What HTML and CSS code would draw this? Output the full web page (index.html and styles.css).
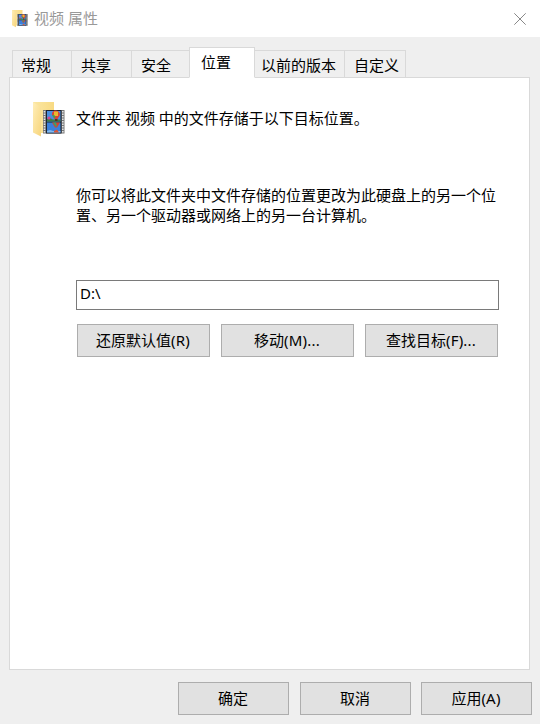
FILE: index.html
```html
<!DOCTYPE html>
<html lang="zh-CN">
<head>
<meta charset="utf-8">
<title>视频 属性</title>
<link rel="stylesheet" href="styles.css">
</head>
<body>
<svg width="0" height="0" class="defs" aria-hidden="true">
  <defs>
    <linearGradient id="back" x1="0" y1="0" x2="1" y2="0"><stop offset="0" stop-color="#fbe7a3"/><stop offset="1" stop-color="#f8da83"/></linearGradient>
    <linearGradient id="front" x1="0" y1="0" x2="1" y2="1"><stop offset="0" stop-color="#ffeeb8"/><stop offset="1" stop-color="#f7d57c"/></linearGradient>
    <symbol id="video-folder" viewBox="0 0 32 36">
      <path d="M0 0H21V31H6L0 30Z" fill="url(#back)"/>
      <path d="M0 0L8 5V34.500L0 30.500Z" fill="url(#front)"/>
      <rect x="10" y="8" width="21.500" height="23.500" fill="#777"/>
      <path d="M11.500 9V31M29.800 9V31" stroke="#e4e4e4" stroke-width="1.600" stroke-dasharray="1.500 1"/>
      <rect x="13" y="8" width="15.500" height="23.500" fill="#1d2430"/>
      <rect x="14" y="9" width="13.500" height="10.500" fill="#4a8ee0"/>
      <rect x="14" y="20.500" width="13.500" height="10" fill="#3a80dc"/>
      <path d="M14 17L17 16L20 17.500H27.500V19.500H14Z" fill="#3d7c4c"/>
      <circle cx="16" cy="16" r="1.600" fill="#d7478b"/>
      <path d="M19 13C18 7 27 7 27 13L24.500 17H21.500Z" fill="#dc4434"/>
      <path d="M21 9.500H25V14H21Z" fill="#e9b82d"/>
      <path d="M19 13H21.500L22.500 16H21Z" fill="#3fa552"/>
      <path d="M22 17H24.500V19H22Z" fill="#54361f"/>
      <path d="M19 20.500H27L24 25.500H22Z" fill="#da402c"/>
      <path d="M20 20.500H23L24 24.500H22.500Z" fill="#37a16c"/>
      <path d="M14 29L17 28L20 29H27.500V30.500H14Z" fill="#83b9ed"/>
      <path d="M21 29L24 27.500L26 30.500H21Z" fill="#d85535"/>
    </symbol>
  </defs>
</svg>
<header class="titlebar">
  <svg class="title-icon"><use href="#video-folder"/></svg>
  <span class="title">视频 属性</span>
  <svg class="close" viewBox="0 0 12 12" aria-label="关闭"><path d="M.3.3L11.700 11.700M11.700.3L.3 11.700"/></svg>
</header>
<main class="dialog">
  <nav class="tabs">
    <div class="tab general">常规</div>
    <div class="tab sharing">共享</div>
    <div class="tab security">安全</div>
    <div class="tab active">位置</div>
    <div class="tab versions">以前的版本</div>
    <div class="tab custom">自定义</div>
  </nav>
  <section class="panel">
    <div class="summary">
      <svg class="folder-icon"><use href="#video-folder"/></svg>
      <p>文件夹 视频 中的文件存储于以下目标位置。</p>
    </div>
    <p class="description">你可以将此文件夹中文件存储的位置更改为此硬盘上的另一个位<br>置、另一个驱动器或网络上的另一台计算机。</p>
    <div class="path">D:\</div>
    <div class="actions">
      <button>还原默认值<span class="key">(R)</span></button>
      <button>移动<span class="key">(M)...</span></button>
      <button>查找目标<span class="key">(F)...</span></button>
    </div>
  </section>
  <footer class="footer">
    <button>确定</button>
    <button>取消</button>
    <button>应用<span class="key">(A)</span></button>
  </footer>
</main>
</body>
</html>
```
FILE: styles.css
```css
* { box-sizing: border-box; }
body {
  margin: 0;
  width: 540px;
  height: 724px;
  overflow: hidden;
  background: #efefef;
  color: #000;
  font: 15px/20px "Noto Sans", "Noto Sans CJK SC", sans-serif;
}
p { margin: 0; }
.defs { display: block; }
.titlebar {
  display: flex;
  align-items: center;
  height: 37px;
  padding: 0 14px 0 12px;
  background: #fff;
  color: #999;
}
.title-icon { width: 16px; height: 18px; margin-right: 6px; }
.title { flex: 1; padding-bottom: 2px; }
.close { width: 12px; height: 12px; fill: none; stroke: #888; stroke-width: 1; }
.dialog { padding: 10px 8px 0 9px; }
.tabs {
  position: relative;
  z-index: 1;
  display: flex;
  align-items: flex-end;
  height: 31px;
  margin: 0 0 -1px 3px;
}
.tab {
  height: 28px;
  padding: 4px 0 0 9px;
  border: 1px solid #d9d9d9;
  border-left: 0;
  white-space: nowrap;
}
.general { width: 60px; border-left: 1px solid #d9d9d9; padding-left: 8px; }
.sharing { width: 60px; }
.security { width: 57px; border-right: 0; }
.active {
  width: 66px;
  height: 31px;
  padding: 4px 0 0 11px;
  border-left: 1px solid #d9d9d9;
  border-bottom-color: #fff;
  background: #fff;
}
.versions { width: 90px; padding-left: 6px; }
.custom { width: 61px; }
.panel {
  width: 521px;
  height: 593px;
  padding: 24px 30px 0 23px;
  border: 1px solid #d9d9d9;
  background: #fff;
}
.summary { display: flex; height: 36px; }
.summary p { padding-top: 6px; margin-left: 11px; }
.folder-icon { width: 32px; height: 36px; }
.description { margin: 47px 0 0 43px; white-space: nowrap; }
.path {
  width: 423px;
  height: 30px;
  margin: 55px 0 0 43px;
  padding: 2px 3px;
  border: 1px solid #7a7a7a;
}
.actions { display: flex; gap: 11px; margin: 14px 0 0 44px; }
button {
  height: 33px;
  padding: 0 1px 2px 0;
  border: 1px solid #adadad;
  border-radius: 0;
  background: #e1e1e1;
  color: #000;
  font: inherit;
}
.key { letter-spacing: .2px; }
.actions button { width: 133px; }
.footer { display: flex; justify-content: flex-end; gap: 10px; padding-top: 12px; }
.footer button { width: 111px; }
.footer button:first-child { margin-right: 1px; }
```
